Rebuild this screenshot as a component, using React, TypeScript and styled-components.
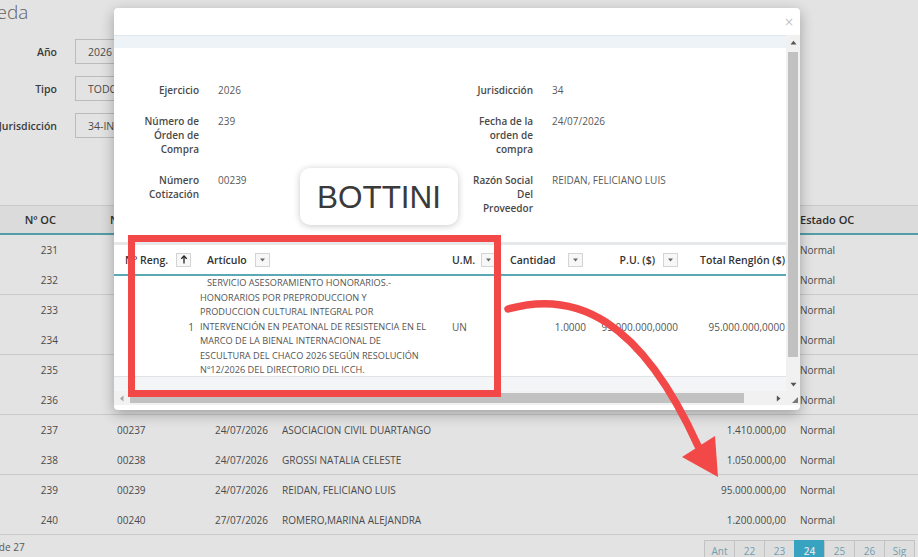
import React from 'react';
import styled, { createGlobalStyle } from 'styled-components';

interface OrderRow {
  oc: number;
  cot: string;
  fecha: string;
  razon: string;
  total: string;
}

const rows: OrderRow[] = [
  { oc: 231, cot: '00231', fecha: '21/07/2026', razon: 'LOPEZ, MARIA JOSE', total: '850.000,00' },
  { oc: 232, cot: '00232', fecha: '21/07/2026', razon: 'FERNANDEZ, JUAN CARLOS', total: '620.000,00' },
  { oc: 233, cot: '00233', fecha: '22/07/2026', razon: 'GIMENEZ, ANA LAURA', total: '1.100.000,00' },
  { oc: 234, cot: '00234', fecha: '22/07/2026', razon: 'SOSA, RICARDO DANIEL', total: '480.000,00' },
  { oc: 235, cot: '00235', fecha: '23/07/2026', razon: 'ACOSTA, PABLO MARTIN', total: '900.000,00' },
  { oc: 236, cot: '00236', fecha: '23/07/2026', razon: 'BENITEZ, CLAUDIA', total: '750.000,00' },
  { oc: 237, cot: '00237', fecha: '24/07/2026', razon: 'ASOCIACION CIVIL DUARTANGO', total: '1.410.000,00' },
  { oc: 238, cot: '00238', fecha: '24/07/2026', razon: 'GROSSI NATALIA CELESTE', total: '1.050.000,00' },
  { oc: 239, cot: '00239', fecha: '24/07/2026', razon: 'REIDAN, FELICIANO LUIS', total: '95.000.000,00' },
  { oc: 240, cot: '00240', fecha: '27/07/2026', razon: 'ROMERO,MARINA ALEJANDRA', total: '1.200.000,00' },
];

const articleLines = [
  'SERVICIO ASESORAMIENTO HONORARIOS.-',
  'HONORARIOS POR PREPRODUCCION Y',
  'PRODUCCION CULTURAL INTEGRAL POR',
  'INTERVENCIÓN EN PEATONAL DE RESISTENCIA EN EL',
  'MARCO DE LA BIENAL INTERNACIONAL DE',
  'ESCULTURA DEL CHACO 2026 SEGÚN RESOLUCIÓN',
  'Nº12/2026 DEL DIRECTORIO DEL ICCH.',
];

const pages = ['Ant', '22', '23', '24', '25', '26', 'Sig'];

const SortUp = () => (
  <svg width="8" height="9" viewBox="0 0 8 9">
    <path d="M4 1 L4 8.5" stroke="#222" strokeWidth="1.3" />
    <path d="M1.3 3.8 L4 1 L6.7 3.8" stroke="#222" strokeWidth="1.3" fill="none" />
  </svg>
);

const Caret = () => (
  <svg width="7" height="4" viewBox="0 0 7 4">
    <path d="M1 0.5 L6 0.5 L3.5 3.5 Z" fill="#666" />
  </svg>
);

const Tri = ({ dir }: { dir: 'up' | 'down' | 'left' | 'right' }) => {
  const d = {
    up: 'M0.5 4.5 L3.5 0.8 L6.5 4.5 Z',
    down: 'M0.5 0.8 L6.5 0.8 L3.5 4.5 Z',
    left: 'M4.5 0.5 L4.5 6.5 L0.8 3.5 Z',
    right: 'M0.8 0.5 L0.8 6.5 L4.5 3.5 Z',
  }[dir];
  const vertical = dir === 'up' || dir === 'down';
  return (
    <svg width={vertical ? 7 : 5} height={vertical ? 5 : 7} viewBox={vertical ? '0 0 7 5' : '0 0 5 7'}>
      <path d={d} fill={dir === 'left' ? '#a8a8a8' : '#555'} />
    </svg>
  );
};

const App: React.FC = () => {
  return (
    <>
      <GlobalStyle />
      <Page>
        <Title>Búsqueda</Title>
        <Filters>
          <FilterRow>
            <FilterLabel>Año</FilterLabel>
            <FilterInput>2026</FilterInput>
          </FilterRow>
          <FilterRow>
            <FilterLabel>Tipo</FilterLabel>
            <FilterInput>TODOS</FilterInput>
          </FilterRow>
          <FilterRow>
            <FilterLabel>Jurisdicción</FilterLabel>
            <FilterInput>34-INSTITUTO DE CULTURA</FilterInput>
          </FilterRow>
        </Filters>

        <ResultTable>
          <HeadRow>
            <HeadCell $align="right">Nº OC</HeadCell>
            <HeadCell $pad={45}>Nº Cotización</HeadCell>
            <HeadCell $align="right">Fecha</HeadCell>
            <HeadCell>Razón Social</HeadCell>
            <HeadCell $align="right">Total ($)</HeadCell>
            <HeadCell>Estado OC</HeadCell>
          </HeadRow>
          {rows.map((r, i) => (
            <BodyRow key={r.oc} $divider={i % 2 === 1}>
              <BodyCell $align="right">{r.oc}</BodyCell>
              <BodyCell $pad={52}>{r.cot}</BodyCell>
              <BodyCell $align="right">{r.fecha}</BodyCell>
              <BodyCell>{r.razon}</BodyCell>
              <BodyCell $align="right">{r.total}</BodyCell>
              <BodyCell>Normal</BodyCell>
            </BodyRow>
          ))}
        </ResultTable>

        <Footer>
          <FooterInfo>Página 24 de 27</FooterInfo>
          <Pager>
            {pages.map((p) => (
              <PageButton key={p} $active={p === '24'}>{p}</PageButton>
            ))}
          </Pager>
        </Footer>

        <Backdrop />

        <Modal>
          <ModalHeader>
            <CloseButton>×</CloseButton>
          </ModalHeader>
          <ModalBody>
            <ScrollContent>
              <ToolbarBand />
              <DetailGrid>
                <DetailLabel>Ejercicio</DetailLabel>
                <DetailValue>2026</DetailValue>
                <DetailLabel>Jurisdicción</DetailLabel>
                <DetailValue>34</DetailValue>

                <DetailLabel>Número de Órden de Compra</DetailLabel>
                <DetailValue>239</DetailValue>
                <DetailLabel>Fecha de la orden de compra</DetailLabel>
                <DetailValue>24/07/2026</DetailValue>

                <DetailLabel>Número Cotización</DetailLabel>
                <DetailValue>00239</DetailValue>
                <DetailLabel>Razón Social Del Proveedor</DetailLabel>
                <DetailValue>REIDAN, FELICIANO LUIS</DetailValue>
              </DetailGrid>

              <ItemGrid>
                <ItemHead>
                  <ItemHeadCell $pad={11}>
                    Nº Reng.
                    <HeadButton><SortUp /></HeadButton>
                  </ItemHeadCell>
                  <ItemHeadCell $pad={7}>
                    Artículo
                    <HeadButton><Caret /></HeadButton>
                  </ItemHeadCell>
                  <ItemHeadCell $pad={7}>
                    U.M.
                    <HeadButton $gap={6}><Caret /></HeadButton>
                  </ItemHeadCell>
                  <ItemHeadCell $pad={8}>
                    Cantidad
                    <HeadButton $gap={12}><Caret /></HeadButton>
                  </ItemHeadCell>
                  <ItemHeadCell $align="right" $pad={4}>
                    P.U. ($)
                    <HeadButton><Caret /></HeadButton>
                  </ItemHeadCell>
                  <ItemHeadCell $align="right" $pad={7}>
                    Total Renglón ($)
                  </ItemHeadCell>
                </ItemHead>
                <ItemRow>
                  <ItemCell $align="right" $pad={6}>1</ItemCell>
                  <ArticleCell>
                    {articleLines.map((l, i) => (
                      <ArticleLine key={i} $indent={i === 0}>{l}</ArticleLine>
                    ))}
                  </ArticleCell>
                  <ItemCell $pad={7}>UN</ItemCell>
                  <ItemCell $align="right" $pad={4}>1.0000</ItemCell>
                  <ItemCell $align="right" $pad={4}>95.000.000,0000</ItemCell>
                  <ItemCell $align="right" $pad={7}>95.000.000,0000</ItemCell>
                </ItemRow>
                <ItemFooter />
              </ItemGrid>
            </ScrollContent>

            <VScroll>
              <ScrollArrow><Tri dir="up" /></ScrollArrow>
              <VThumb />
              <ScrollTrack />
              <ScrollArrow><Tri dir="down" /></ScrollArrow>
            </VScroll>
            <HScroll>
              <ScrollArrow><Tri dir="left" /></ScrollArrow>
              <HThumb />
              <ScrollArrow $wide><Tri dir="right" /></ScrollArrow>
            </HScroll>
            <ScrollCorner>
              <svg width="6" height="6" viewBox="0 0 6 6">
                <path d="M6 0 L6 6 L0 6 Z" fill="#777" />
              </svg>
            </ScrollCorner>
          </ModalBody>
        </Modal>

        <HighlightBox />
        <NameTag>BOTTINI</NameTag>
        <ArrowLayer width="918" height="557" viewBox="0 0 918 557">
          <path
            d="M508 309 C 575 290, 640 318, 698 446"
            stroke="#f24848"
            strokeWidth="7.5"
            fill="none"
            strokeLinecap="round"
          />
          <path d="M682 457 L715 436 L718 477 Z" fill="#f24848" />
        </ArrowLayer>
      </Page>
    </>
  );
};

const GlobalStyle = createGlobalStyle`
  html, body {
    margin: 0;
    padding: 0;
    background: #fff;
    overflow: hidden;
  }
  body {
    font-family: 'Open Sans', 'Liberation Sans', sans-serif;
    color: #555;
  }
  * {
    box-sizing: border-box;
  }
`;

const Page = styled.div`
  position: relative;
  width: 918px;
  height: 557px;
  overflow: hidden;
  display: flex;
  flex-direction: column;
  background: #fff;
`;

const Title = styled.h2`
  margin: 0 0 0 -58px;
  font-size: 19px;
  font-weight: 300;
  line-height: 24px;
  color: #6e6e6e;
  white-space: nowrap;
`;

const Filters = styled.div`
  display: flex;
  flex-direction: column;
  gap: 12px;
  margin-top: 15px;
`;

const FilterRow = styled.div`
  display: grid;
  grid-template-columns: 57px 300px;
  column-gap: 18px;
  align-items: center;
  height: 25px;
`;

const FilterLabel = styled.label`
  display: flex;
  justify-content: flex-end;
  white-space: nowrap;
  font-size: 10.5px;
  font-weight: 600;
  color: #444;
`;

const FilterInput = styled.div`
  height: 25px;
  border: 1px solid #d2d2d2;
  padding-left: 12px;
  display: flex;
  align-items: center;
  font-size: 10.5px;
  color: #555;
  white-space: nowrap;
`;

const ResultTable = styled.div`
  margin-top: 67px;
  display: flex;
  flex-direction: column;
`;

const columns = '65px 140px 70px 1fr 150px 125px';

const HeadRow = styled.div`
  display: grid;
  grid-template-columns: ${columns};
  height: 30px;
  background: #f6f6f6;
  border-top: 1px solid #e2e2e2;
  border-bottom: 2px solid #5eb1bc;
`;

const HeadCell = styled.div<{ $align?: 'right'; $pad?: number }>`
  display: flex;
  align-items: center;
  justify-content: ${({ $align }) => ($align === 'right' ? 'flex-end' : 'flex-start')};
  padding: ${({ $align, $pad }) => ($align === 'right' ? '0 9px 0 0' : `0 0 0 ${$pad ?? 7}px`)};
  font-size: 11px;
  font-weight: 600;
  color: #333;
  white-space: nowrap;
`;

const BodyRow = styled.div<{ $divider: boolean }>`
  display: grid;
  grid-template-columns: ${columns};
  height: 30px;
  border-bottom: 1px solid ${({ $divider }) => ($divider ? '#e3e3e3' : 'transparent')};
`;

const BodyCell = styled.div<{ $align?: 'right'; $pad?: number }>`
  display: flex;
  align-items: center;
  justify-content: ${({ $align }) => ($align === 'right' ? 'flex-end' : 'flex-start')};
  padding: ${({ $align, $pad }) => ($align === 'right' ? '0 7px 0 0' : `0 0 0 ${$pad ?? 7}px`)};
  font-size: 10px;
  color: #555;
  white-space: nowrap;
  overflow: hidden;
`;

const Footer = styled.div`
  display: flex;
  justify-content: space-between;
  align-items: flex-start;
  padding-top: 5px;
  flex: 1;
`;

const FooterInfo = styled.div`
  margin-left: -49px;
  margin-top: 0;
  font-size: 10px;
  color: #666;
  white-space: nowrap;
`;

const Pager = styled.div`
  display: flex;
  margin-right: 3px;
`;

const PageButton = styled.div<{ $active: boolean }>`
  width: 31px;
  height: 22px;
  margin-left: -1px;
  display: flex;
  align-items: center;
  justify-content: center;
  font-size: 10px;
  border: 1px solid ${({ $active }) => ($active ? '#3fb8d9' : '#dadada')};
  background: ${({ $active }) => ($active ? '#3fb8d9' : '#fafafa')};
  color: ${({ $active }) => ($active ? '#fff' : '#7fb3c6')};
  font-weight: ${({ $active }) => ($active ? 600 : 400)};
`;

const Backdrop = styled.div`
  position: absolute;
  inset: 0;
  background: rgba(0, 0, 0, 0.11);
`;

const Modal = styled.div`
  position: absolute;
  left: 114px;
  top: 8px;
  width: 686px;
  height: 402px;
  background: #fff;
  border-radius: 4px;
  box-shadow: 0 4px 14px rgba(0, 0, 0, 0.3);
  display: flex;
  flex-direction: column;
  padding-bottom: 5px;
  overflow: hidden;
`;

const ModalHeader = styled.div`
  height: 27px;
  display: flex;
  justify-content: flex-end;
  align-items: center;
  padding-right: 6px;
  flex-shrink: 0;
`;

const CloseButton = styled.span`
  font-family: 'DejaVu Sans', sans-serif;
  font-size: 12px;
  color: #c4c4c4;
  line-height: 1;
`;

const ModalBody = styled.div`
  flex: 1;
  display: grid;
  grid-template-columns: 1fr 14px;
  grid-template-rows: 1fr 14px;
  min-height: 0;
`;

const ScrollContent = styled.div`
  overflow: hidden;
  display: flex;
  flex-direction: column;
  min-width: 0;
`;

const ToolbarBand = styled.div`
  height: 13px;
  flex-shrink: 0;
  background: #eef3f8;
  border-top: 1px solid #e1e7ee;
`;

const DetailGrid = styled.div`
  display: grid;
  grid-template-columns: 66px 230px 66px 1fr;
  column-gap: 19px;
  row-gap: 17px;
  padding: 35px 0 0 19px;
  font-size: 10px;
  line-height: 14px;
`;

const DetailLabel = styled.div`
  text-align: right;
  font-weight: 600;
  color: #4a4a4a;
  font-size: 10px;
`;

const DetailValue = styled.div`
  color: #5a5a5a;
  font-size: 10px;
`;

const ItemGrid = styled.div`
  margin-top: 27px;
  width: 678px;
  display: flex;
  flex-direction: column;
  flex-shrink: 0;
`;

const itemColumns = '86px 245px 57px 88px 92px 110px';

const ItemHead = styled.div`
  display: grid;
  grid-template-columns: ${itemColumns};
  height: 34px;
  border-top: 3px solid #e6e8ea;
  border-bottom: 2px solid #5aa9b4;
`;

const ItemHeadCell = styled.div<{ $align?: 'right'; $pad?: number }>`
  display: flex;
  align-items: center;
  justify-content: ${({ $align }) => ($align === 'right' ? 'flex-end' : 'flex-start')};
  padding: ${({ $align, $pad }) => ($align === 'right' ? `0 ${$pad ?? 6}px 0 0` : `0 0 0 ${$pad ?? 7}px`)};
  font-size: 10.5px;
  font-weight: 600;
  color: #333;
  white-space: nowrap;
`;

const HeadButton = styled.span<{ $gap?: number }>`
  width: 15px;
  height: 14px;
  margin-left: ${({ $gap }) => $gap ?? 8}px;
  border: 1px solid #d4d4d4;
  background: #f7f7f7;
  display: inline-flex;
  align-items: center;
  justify-content: center;
`;

const ItemRow = styled.div`
  display: grid;
  grid-template-columns: ${itemColumns};
  height: 101px;
  border-bottom: 1px solid #dfe3e6;
`;

const ItemCell = styled.div<{ $align?: 'right'; $pad?: number }>`
  display: flex;
  align-items: center;
  justify-content: ${({ $align }) => ($align === 'right' ? 'flex-end' : 'flex-start')};
  padding: ${({ $align, $pad }) => ($align === 'right' ? `0 ${$pad ?? 6}px 0 0` : `0 0 0 ${$pad ?? 7}px`)};
  font-size: 10px;
  color: #555;
  white-space: nowrap;
`;

const ArticleCell = styled.div`
  display: flex;
  flex-direction: column;
  justify-content: center;
  color: #555;
`;

const ArticleLine = styled.div<{ $indent: boolean }>`
  height: 14.5px;
  font-size: 9.2px;
  line-height: 14.5px;
  white-space: nowrap;
  padding-left: ${({ $indent }) => ($indent ? 7 : 0)}px;
`;

const ItemFooter = styled.div`
  height: 14px;
  background: #f3f5f7;
`;

const VScroll = styled.div`
  display: flex;
  flex-direction: column;
  background: #f1f1f1;
`;

const ScrollArrow = styled.div<{ $wide?: boolean }>`
  width: ${({ $wide }) => ($wide ? '16px' : '14px')};
  height: 14px;
  flex-shrink: 0;
  display: flex;
  align-items: center;
  justify-content: center;
`;

const VThumb = styled.div`
  height: 305px;
  margin: 3px 2px 0;
  background: #c1c1c1;
`;

const ScrollTrack = styled.div`
  flex: 1;
`;

const HScroll = styled.div`
  display: flex;
  align-items: stretch;
  background: #f1f1f1;
`;

const HThumb = styled.div`
  flex: 1;
  margin: 2px 26px 2px 2px;
  background: #c1c1c1;
`;

const ScrollCorner = styled.div`
  background: #f1f1f1;
  display: flex;
  align-items: flex-end;
  justify-content: flex-end;
  padding: 0 2px 2px 0;
`;

const HighlightBox = styled.div`
  position: absolute;
  left: 128px;
  top: 235px;
  width: 373px;
  height: 162px;
  border: 7px solid #f24848;
`;

const NameTag = styled.div`
  position: absolute;
  left: 300px;
  top: 168px;
  width: 158px;
  height: 57px;
  border-radius: 10px;
  background: #fff;
  box-shadow: 0 1px 7px rgba(0, 0, 0, 0.22);
  display: flex;
  align-items: center;
  justify-content: center;
  font-family: 'Liberation Sans', Arial, sans-serif;
  font-size: 31.5px;
  color: #3a3a3a;
  padding-top: 2px;
`;

const ArrowLayer = styled.svg`
  position: absolute;
  left: 0;
  top: 0;
  pointer-events: none;
`;

export default App;
